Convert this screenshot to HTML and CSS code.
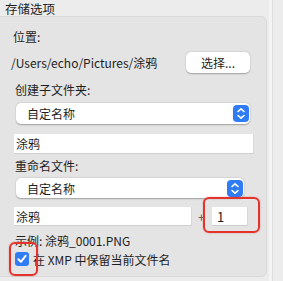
FILE: index.html
```html
<!DOCTYPE html>
<html lang="zh-CN">
<head>
<meta charset="UTF-8">
<meta name="viewport" content="width=device-width, initial-scale=1.0">
<title>存储选项</title>
<link rel="stylesheet" href="styles.css">
</head>
<body>
<div class="window">
  <div class="main">
    <div class="title">存储选项</div>
    <div class="panel">
      <div class="label label-loc">位置:</div>
      <div class="row row-path">
        <span class="path">/Users/echo/Pictures/涂鸦</span>
        <button class="btn" type="button">选择...</button>
      </div>

      <div class="label label-sub">创建子文件夹:</div>
      <div class="select select-sub">
        <span>自定名称</span>
        <span class="stepper">
          <svg width="16" height="17" viewBox="0 0 16 17"><path d="M5 6.5 L8 3.8 L11 6.5 M5 10.5 L8 13.2 L11 10.5" fill="none" stroke="#fff" stroke-width="1.6" stroke-linecap="round" stroke-linejoin="round"/></svg>
        </span>
      </div>
      <input class="field field-sub" type="text" value="涂鸦">

      <div class="label label-ren">重命名文件:</div>
      <div class="select select-ren">
        <span>自定名称</span>
        <span class="stepper">
          <svg width="16" height="17" viewBox="0 0 16 17"><path d="M5 6.5 L8 3.8 L11 6.5 M5 10.5 L8 13.2 L11 10.5" fill="none" stroke="#fff" stroke-width="1.6" stroke-linecap="round" stroke-linejoin="round"/></svg>
        </span>
      </div>
      <div class="row row-name">
        <input class="field field-name" type="text" value="涂鸦">
        <span class="plus">+</span>
        <span class="mark-wrap">
          <input class="field field-num" type="text" value="1">
          <span class="mark mark-num"></span>
        </span>
      </div>

      <div class="label label-ex">示例: 涂鸦_0001.PNG</div>
      <div class="row row-check">
        <span class="mark-wrap">
          <span class="check">
            <svg width="14" height="14" viewBox="0 0 14 14"><path d="M3.4 7.3 L5.9 9.8 L10.6 3.9" fill="none" stroke="#fff" stroke-width="2" stroke-linecap="round" stroke-linejoin="round"/></svg>
          </span>
          <span class="mark mark-check"></span>
        </span>
        <span class="check-text">在 XMP 中保留当前文件名</span>
      </div>
    </div>
  </div>
  <div class="edge"></div>
</div>
</body>
</html>
```

FILE: styles.css
```css
body {
  margin: 0;
  background-color: #ececec;
  font-family: "Noto Sans CJK SC", "Liberation Sans", sans-serif;
  font-size: 12px;
  color: #1e1e1e;
  overflow: hidden;
}

.window {
  display: flex;
  height: 281px;
}

.main {
  width: 267px;
}

.title {
  height: 16px;
  line-height: 17px;
  padding-left: 5px;
  font-size: 12.5px;
}

.panel {
  margin-left: -6px;
  height: 259px;
  background-color: #e4e4e4;
  border: 1px solid #d9d9d9;
  border-radius: 6px;
  display: flex;
  flex-direction: column;
}

.edge {
  width: 3px;
  margin-left: 2px;
  background-color: #f4f4f4;
  border-right: 1px solid #dedede;
}

.label {
  height: 20px;
  line-height: 20px;
  padding-left: 20px;
}

.label-loc { margin-top: 10px; padding-left: 18px; }
.label-sub { margin-top: 7px; }
.label-ren { margin-top: 2px; }
.label-ex { margin-top: 5px; }

.row {
  display: flex;
  align-items: center;
}

.row-path {
  margin-top: 5px;
  height: 21px;
  padding-left: 16px;
}

.path {
  flex: 1;
}

.btn {
  width: 64px;
  height: 21px;
  margin-right: 16px;
  padding: 0;
  background-color: #fff;
  border: none;
  border-radius: 5px;
  box-shadow: 0 0.5px 1.5px rgba(0, 0, 0, 0.3);
  font-family: inherit;
  font-size: 12px;
  color: #1e1e1e;
}

.select {
  position: relative;
  height: 21px;
  margin-left: 21px;
  padding-left: 11px;
  background-color: #fff;
  border-radius: 5px;
  box-shadow: 0 0.5px 1.5px rgba(0, 0, 0, 0.3);
  display: flex;
  align-items: center;
  justify-content: space-between;
}

.select-sub {
  margin-top: 3px;
  width: 223px;
}

.select-ren {
  margin-top: 2px;
  height: 20px;
  width: 217px;
}

.stepper {
  width: 16px;
  height: 17px;
  margin-right: 1px;
  background-color: #2f7cf5;
  border-radius: 4px;
  display: flex;
}

.field {
  box-sizing: border-box;
  height: 20px;
  padding: 0 2px;
  background-color: #fff;
  border: none;
  border-bottom: 1px solid #cfcfcf;
  border-right: 1px solid #d8d8d8;
  font-family: inherit;
  font-size: 12px;
  color: #1e1e1e;
  outline: none;
}

.field-sub {
  margin-top: 10px;
  margin-left: 19px;
  width: 240px;
}

.row-name {
  margin-top: 9px;
  padding-left: 19px;
}

.field-name {
  width: 178px;
  height: 19px;
}

.plus {
  box-sizing: border-box;
  width: 20px;
  padding-left: 6px;
  color: #555;
}

.mark-wrap {
  position: relative;
  display: flex;
}

.field-num {
  width: 36px;
  height: 19px;
  padding-left: 5px;
  font-size: 13px;
}

.mark {
  position: absolute;
  border: 2.5px solid #e2342d;
  border-radius: 6px;
  box-shadow: 0 0 1.5px rgba(226, 52, 45, 0.6);
}

.mark-num {
  left: -9px;
  right: -12px;
  top: -10px;
  bottom: -7px;
}

.row-check {
  margin-top: -2px;
  height: 20px;
  padding-left: 20px;
}

.check {
  width: 14px;
  height: 14px;
  background-color: #2f7cf5;
  border-radius: 3px;
  display: flex;
}

.mark-check {
  left: -6px;
  right: -9px;
  top: -10px;
  bottom: -10px;
}

.check-text {
  margin-left: 4px;
}
```
